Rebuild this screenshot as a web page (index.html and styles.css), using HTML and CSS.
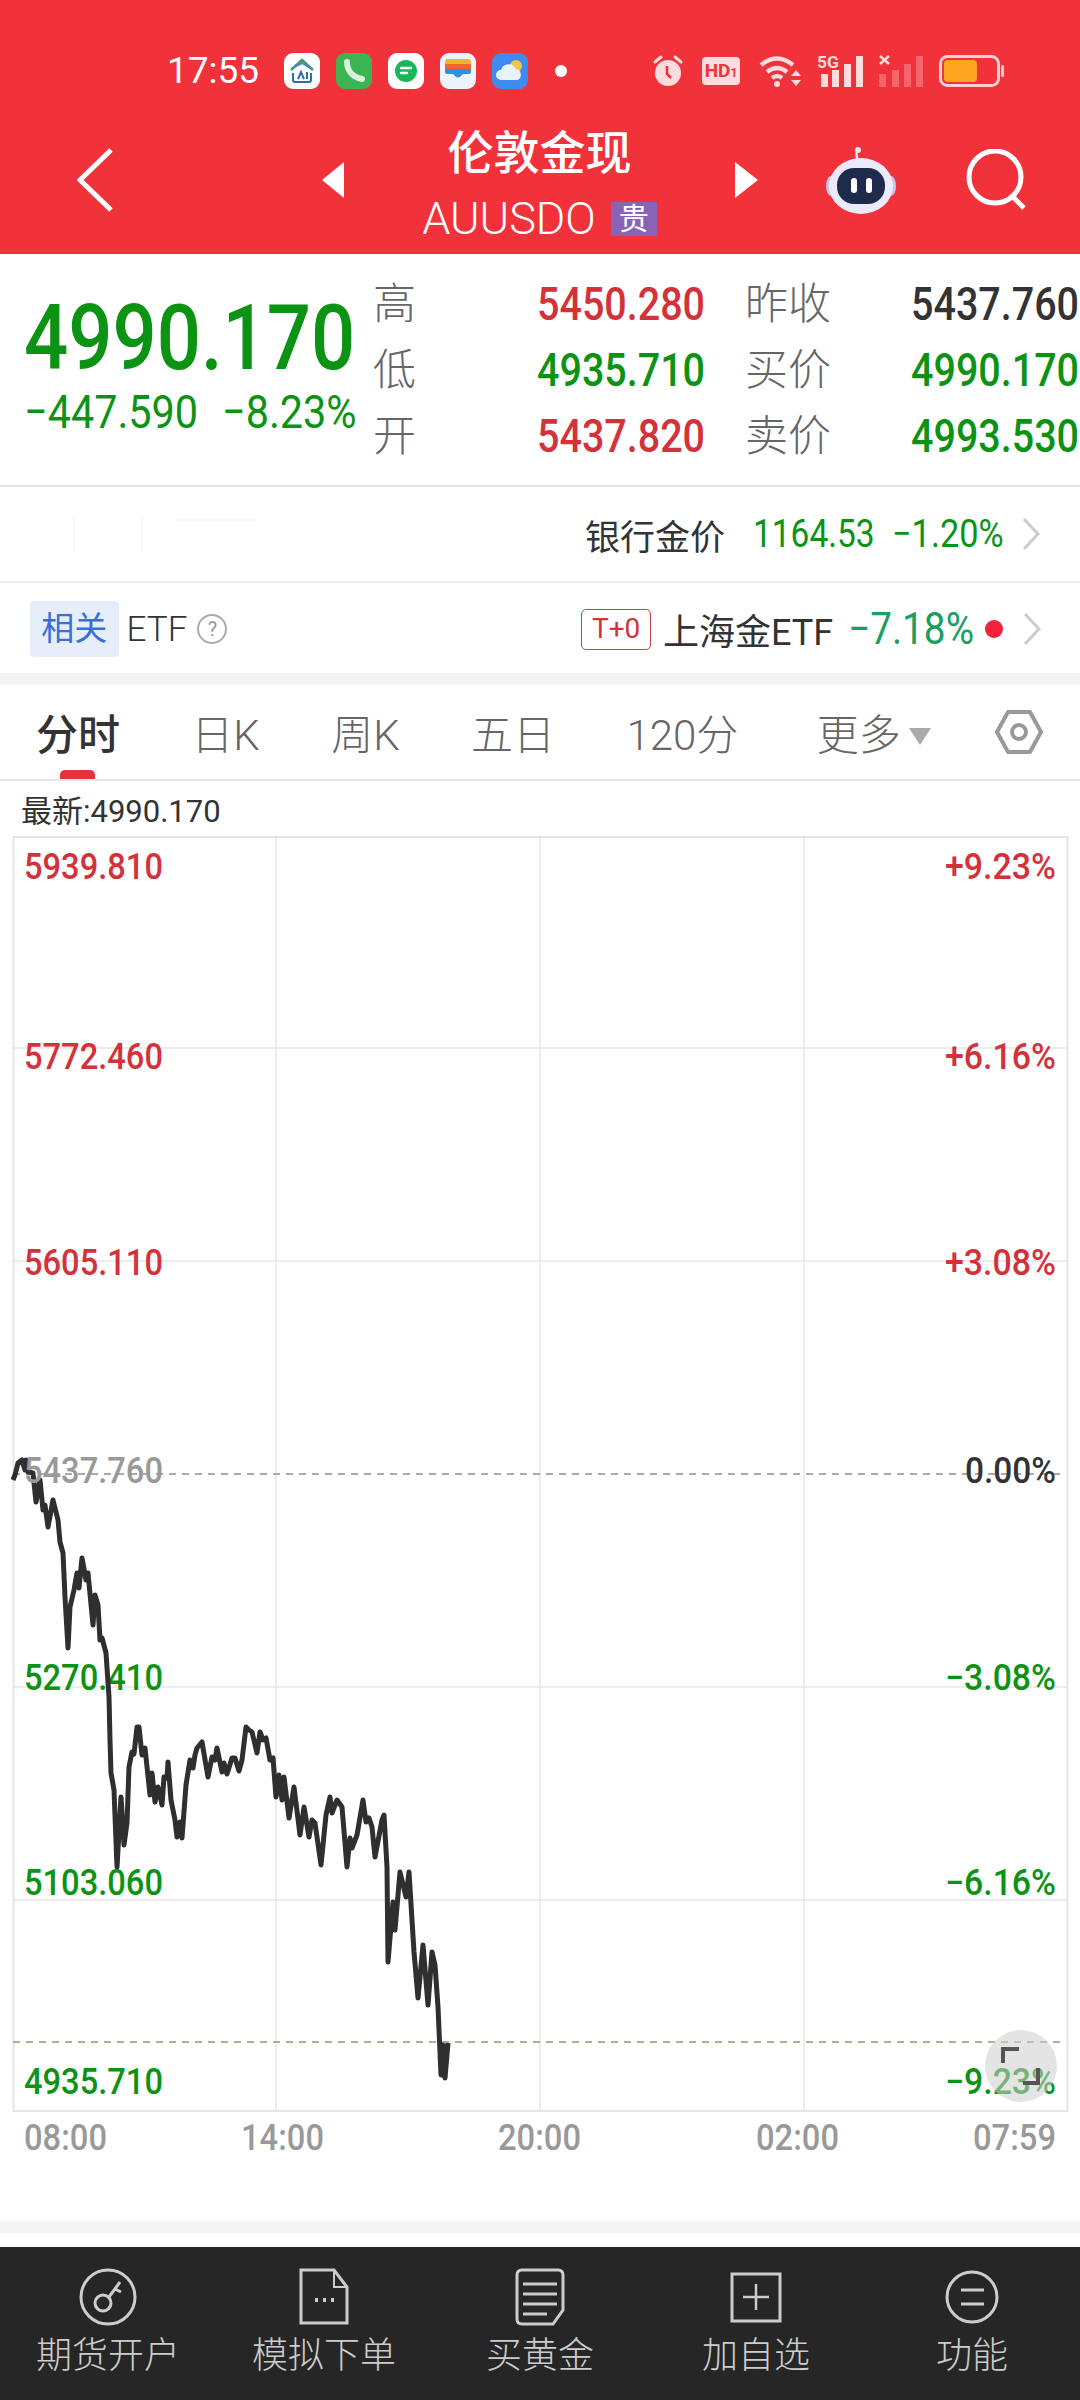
FILE: index.html
```html
<!DOCTYPE html>
<html lang="zh-CN">
<head>
	<meta charset="UTF-8">
	<title>伦敦金现</title>
	<link rel="stylesheet" href="styles.css">
</head>
<body>
	<header class="top">
		<div class="status">
			<span class="time">17:55</span>
			<div class="apps">
				<svg class="app" viewBox="0 0 36 36"><rect width="36" height="36" rx="9" fill="#fff"/><path d="M7 17 18 7l11 10" fill="none" stroke="#3d9a6a" stroke-width="2.5"/><path d="M10 14 18 10l8 5" fill="none" stroke="#4a86c8" stroke-width="2"/><path d="M9 20v7q0 2 2 2h14q2 0 2-2v-7" fill="none" stroke="#2f6da8" stroke-width="2"/><path d="m14 26 3-7 3 7M23 19v7" fill="none" stroke="#2f6da8" stroke-width="2"/></svg>
				<svg class="app" viewBox="0 0 36 36"><rect width="36" height="36" rx="9" fill="#3cb454"/><path d="M11 9c0 9 6 15 15 17" fill="none" stroke="#d8f2dc" stroke-width="6" stroke-linecap="round"/></svg>
				<svg class="app" viewBox="0 0 36 36"><rect width="36" height="36" rx="9" fill="#fff"/><circle cx="18" cy="18" r="11" fill="#18b85a"/><path d="M13 15h10M13 20h6" stroke="#fff" stroke-width="2.4" stroke-linecap="round"/></svg>
				<svg class="app" viewBox="0 0 36 36"><rect width="36" height="36" rx="9" fill="#eef4fb"/><rect x="5" y="6" width="26" height="7" rx="3" fill="#f0b52c"/><rect x="5" y="11" width="26" height="6" fill="#e8692b"/><path d="M5 16h26v3q0 2-2 2h-5q-2 0-3 2-3 3-6 0-1-2-3-2H7q-2 0-2-2z" fill="#2d8fe6"/></svg>
				<svg class="app" viewBox="0 0 36 36"><rect width="36" height="36" rx="9" fill="#3f8cf0"/><circle cx="24" cy="13" r="6" fill="#f5c644"/><path d="M9 27a5 5 0 0 1 0-10 8 8 0 0 1 15-1 6 6 0 0 1 2 11z" fill="#e8f2fb"/></svg>
				<i class="status-dot"></i>
			</div>
			<div class="sys">
				<svg class="alarm" viewBox="0 0 32 34"><circle cx="16" cy="19" r="13" fill="#fcdcdc"/><path d="M3 8l6-5M29 8l-6-5" stroke="#fcdcdc" stroke-width="3" stroke-linecap="round"/><path d="M15 12v8l4 4" fill="none" stroke="#f2323a" stroke-width="2.5"/></svg>
				<span class="hd">HD<small>1</small></span>
				<svg class="wifi" viewBox="0 0 44 34"><g fill="none" stroke="#fcdcdc" stroke-width="4.4"><path d="M2 11q16-13 32 0"/><path d="M8 18q10-8 20 0"/><path d="M13 24q5-4 10 0"/></g><circle cx="18" cy="30" r="3" fill="#fcdcdc"/><path d="M37 16l-5 6h10zM32 26h10l-5 6z" fill="#fcdcdc"/></svg>
				<svg class="signal" viewBox="0 0 46 34"><text class="sig-text" x="0" y="14" textLength="22" lengthAdjust="spacingAndGlyphs">5G</text><g fill="#fcdcdc"><rect x="4" y="20" width="7" height="13"/><rect x="15" y="16" width="7" height="17"/><rect x="27" y="10" width="7" height="23"/><rect x="39" y="2" width="7" height="31"/></g></svg>
				<svg class="signal-off" viewBox="0 0 46 34"><path d="M2 2l9 8M11 2l-9 8" stroke="#fcdcdc" stroke-width="2.6"/><g fill="#fcdcdc" opacity=".3"><rect x="1" y="20" width="7" height="13"/><rect x="14" y="16" width="7" height="17"/><rect x="26" y="10" width="7" height="23"/><rect x="38" y="2" width="7" height="31"/></g></svg>
				<svg class="battery" viewBox="0 0 66 32"><rect x="1.5" y="1.5" width="58" height="29" rx="7" fill="none" stroke="#fbd0d0" stroke-width="3"/><rect x="5" y="5" width="33" height="22" rx="4" fill="#ffa51f"/><rect x="62" y="10" width="3" height="12" rx="1.5" fill="#fbd0d0"/></svg>
			</div>
		</div>
		<div class="nav">
			<div class="nav-back"><svg width="36" height="64" viewBox="0 0 36 64"><path d="M34 2 3 32l31 30" fill="none" stroke="#fff" stroke-width="5"/></svg></div>
			<svg width="22" height="36" viewBox="0 0 22 36"><path d="M22 0v36L0 18z" fill="#fff"/></svg>
			<div class="title-block">
				<div class="title">伦敦金现</div>
				<div class="sub"><span>AUUSDO</span><b class="badge">贵</b></div>
			</div>
			<svg width="23" height="36" viewBox="0 0 23 36"><path d="M0 0v36l23-18z" fill="#fff"/></svg>
			<svg class="robot" width="72" height="68" viewBox="0 0 72 68"><path d="M33 14q-4-9 2-10" fill="none" stroke="#e8e6f6" stroke-width="2.5"/><circle cx="33" cy="4" r="3" fill="#e8e6f6"/><ellipse cx="6" cy="40" rx="5" ry="10" fill="#c9c6ea"/><ellipse cx="66" cy="40" rx="5" ry="10" fill="#c9c6ea"/><ellipse cx="36" cy="40" rx="32" ry="28" fill="#eceafa"/><rect x="12" y="22" width="48" height="36" rx="17" fill="#1f2b4d"/><rect x="26" y="32" width="6" height="15" rx="3" fill="#fff"/><rect x="41" y="32" width="6" height="15" rx="3" fill="#fff"/></svg>
			<svg class="search" width="62" height="62" viewBox="0 0 62 62"><circle cx="29" cy="28" r="26" fill="none" stroke="#fff" stroke-width="5"/><path d="M46 47l12 12" stroke="#fff" stroke-width="5"/></svg>
		</div>
	</header>

	<section class="quote">
		<div class="price-block">
			<div class="price"><span class="squeeze">4990.170</span></div>
			<div class="change">
				<span class="squeeze">−447.590</span>
				<span class="squeeze">−8.23%</span>
			</div>
		</div>
		<div class="stats">
			<span class="lab">高</span><span class="val red"><span class="squeeze-r">5450.280</span></span>
			<span class="lab lab2">昨收</span><span class="val dark"><span class="squeeze-r">5437.760</span></span>
			<span class="lab">低</span><span class="val green"><span class="squeeze-r">4935.710</span></span>
			<span class="lab lab2">买价</span><span class="val green"><span class="squeeze-r">4990.170</span></span>
			<span class="lab">开</span><span class="val red"><span class="squeeze-r">5437.820</span></span>
			<span class="lab lab2">卖价</span><span class="val green"><span class="squeeze-r">4993.530</span></span>
		</div>
	</section>

	<section class="row row-bank">
		<svg class="ghost" width="230" height="40" viewBox="0 0 230 40"><path d="M44 2v36M112 2v36M146 6h80" stroke="#f8f8f8" stroke-width="2" fill="none"/></svg>
		<span class="row-name">银行金价</span>
		<span class="bank-num green"><span class="squeeze">1164.53</span></span>
		<span class="bank-pct green"><span class="squeeze">−1.20%</span></span>
		<svg class="chev" width="18" height="32" viewBox="0 0 18 32"><path d="M2 1l14 15L2 31" fill="none" stroke="#ccc" stroke-width="3"/></svg>
	</section>

	<section class="row row-etf">
		<span class="tag">相关</span>
		<span class="etf">ETF</span>
		<span class="help">?</span>
		<span class="t0">T+0</span>
		<span class="row-name etf-name">上海金ETF</span>
		<span class="etf-pct"><span class="squeeze">−7.18%</span></span>
		<i class="red-dot"></i>
		<svg class="chev" width="18" height="32" viewBox="0 0 18 32"><path d="M2 1l14 15L2 31" fill="none" stroke="#ccc" stroke-width="3"/></svg>
	</section>

	<div class="strip"></div>

	<nav class="tabs">
		<span class="tab on">分时</span>
		<span class="tab">日K</span>
		<span class="tab">周K</span>
		<span class="tab">五日</span>
		<span class="tab">120分</span>
		<span class="tab more">更多<i class="caret"></i></span>
		<svg class="hex" width="48" height="44" viewBox="0 0 48 44"><path d="M13 2h22l11 20-11 20H13L2 22z" fill="none" stroke="#999" stroke-width="4" stroke-linejoin="round"/><circle cx="24" cy="22" r="7" fill="none" stroke="#999" stroke-width="4"/></svg>
	</nav>

	<div class="latest">最新:4990.170</div>

	<svg class="chart" width="1080" height="1385" viewBox="0 836 1080 1385">
		<g class="grid">
			<rect x="13.5" y="837" width="1054" height="1274"/>
			<path d="M276 837v1274M540 837v1274M804 837v1274M13 1048h1054M13 1261h1054M13 1687h1054M13 1900h1054"/>
		</g>
		<path class="base" d="M13 1474h1050"/>
		<path class="now" d="M13 2042h1050"/>

		<g class="nums">
			<text class="red" x="24" y="879" textLength="139" lengthAdjust="spacingAndGlyphs">5939.810</text>
			<text class="red" x="24" y="1069" textLength="139" lengthAdjust="spacingAndGlyphs">5772.460</text>
			<text class="red" x="24" y="1275" textLength="139" lengthAdjust="spacingAndGlyphs">5605.110</text>
			<text class="green" x="24" y="1690" textLength="139" lengthAdjust="spacingAndGlyphs">5270.410</text>
			<text class="green" x="24" y="1895" textLength="139" lengthAdjust="spacingAndGlyphs">5103.060</text>
			<text class="green" x="24" y="2094" textLength="139" lengthAdjust="spacingAndGlyphs">4935.710</text>

			<text class="red" x="945" y="879" textLength="111" lengthAdjust="spacingAndGlyphs">+9.23%</text>
			<text class="red" x="945" y="1069" textLength="111" lengthAdjust="spacingAndGlyphs">+6.16%</text>
			<text class="red" x="945" y="1275" textLength="111" lengthAdjust="spacingAndGlyphs">+3.08%</text>
			<text class="dark" x="965" y="1483" textLength="91" lengthAdjust="spacingAndGlyphs">0.00%</text>
			<text class="green" x="945" y="1690" textLength="111" lengthAdjust="spacingAndGlyphs">−3.08%</text>
			<text class="green" x="945" y="1895" textLength="111" lengthAdjust="spacingAndGlyphs">−6.16%</text>
			<text class="green" x="945" y="2094" textLength="111" lengthAdjust="spacingAndGlyphs">−9.23%</text>

			<text class="gray" x="24" y="2150" textLength="83" lengthAdjust="spacingAndGlyphs">08:00</text>
			<text class="gray" x="241" y="2150" textLength="83" lengthAdjust="spacingAndGlyphs">14:00</text>
			<text class="gray" x="498" y="2150" textLength="83" lengthAdjust="spacingAndGlyphs">20:00</text>
			<text class="gray" x="756" y="2150" textLength="83" lengthAdjust="spacingAndGlyphs">02:00</text>
			<text class="gray" x="973" y="2150" textLength="83" lengthAdjust="spacingAndGlyphs">07:59</text>
		</g>

		<path class="line" d="M13 1480 15 1475 18 1463 22 1460 25 1470 26 1460 28 1472 33 1473 36 1502 40 1480 43 1510 45 1505 48 1527 53 1500 58 1520 60 1542 63 1553 65 1597 68 1648 70 1607 74 1590 77 1573 79 1588 82 1558 86 1580 88 1573 93 1625 95 1595 98 1605 100 1640 102 1638 106 1653 109 1697 110 1740 111 1773 114 1790 117 1867 121 1797 124 1845 127 1823 129 1767 132 1752 134 1754 137 1727 139 1727 142 1755 145 1748 150 1795 152 1773 155 1802 158 1787 162 1805 164 1777 167 1778 168 1762 171 1800 175 1820 177 1837 180 1822 182 1838 186 1785 190 1760 193 1768 195 1755 197 1748 202 1742 208 1777 212 1757 215 1760 217 1748 222 1772 224 1763 227 1774 232 1758 235 1758 239 1771 242 1760 246 1727 249 1730 252 1732 257 1753 260 1732 263 1740 266 1738 270 1760 273 1758 276 1797 279 1775 282 1800 284 1777 289 1818 294 1787 300 1835 304 1807 309 1837 312 1820 315 1823 321 1865 326 1815 330 1797 332 1813 337 1800 342 1807 347 1867 350 1838 352 1848 357 1835 363 1800 366 1822 369 1818 372 1827 375 1857 382 1820 384 1815 387 1867 388 1962 393 1902 395 1930 400 1872 406 1897 409 1872 414 1952 418 1998 423 1945 428 2005 432 1952 435 1965 438 2007 441 2075 443 2045 445 2078 448 2043"/>

		<text class="nums-over" x="24" y="1483" textLength="139" lengthAdjust="spacingAndGlyphs">5437.760</text>

		<circle class="zoom-bg" cx="1021" cy="2066" r="36"/>
		<path class="zoom-ic" d="M1003 2063v-14h16M1023 2083h15v-15"/>
	</svg>

	<div class="strip"></div>

	<footer class="bar">
		<div class="bar-item">
			<svg width="60" height="60" viewBox="0 0 60 60"><circle cx="30" cy="30" r="27" fill="none" stroke="#ccc" stroke-width="3"/><circle cx="25" cy="36" r="8" fill="none" stroke="#ccc" stroke-width="3"/><path d="M31 30l11-15M37 22l6 3" fill="none" stroke="#ccc" stroke-width="3"/></svg>
			<span>期货开户</span>
		</div>
		<div class="bar-item">
			<svg width="60" height="60" viewBox="0 0 60 60"><path d="M7 3h33l13 17v36H7z" fill="none" stroke="#ccc" stroke-width="3"/><path d="M40 3v17h13" fill="none" stroke="#ccc" stroke-width="2"/><path d="M21 33h3M29 33h3M37 33h3" stroke="#ccc" stroke-width="4"/></svg>
			<span>模拟下单</span>
		</div>
		<div class="bar-item">
			<svg width="60" height="60" viewBox="0 0 60 60"><path d="M12 3h36q5 0 5 5v35L43 57H12q-5 0-5-5V8q0-5 5-5z" fill="none" stroke="#ccc" stroke-width="3"/><path d="M13 17h34M13 27h34M13 37h34M13 47h24" stroke="#ccc" stroke-width="3"/></svg>
			<span>买黄金</span>
		</div>
		<div class="bar-item">
			<svg width="60" height="60" viewBox="0 0 60 60"><rect x="6" y="7" width="48" height="47" fill="none" stroke="#ccc" stroke-width="3"/><path d="M30 17v26M17 30h26" stroke="#ccc" stroke-width="2.5"/></svg>
			<span>加自选</span>
		</div>
		<div class="bar-item">
			<svg width="60" height="60" viewBox="0 0 60 60"><circle cx="30" cy="30" r="25" fill="none" stroke="#ccc" stroke-width="3"/><path d="M19 23h23M19 37h23" stroke="#ccc" stroke-width="3"/></svg>
			<span>功能</span>
		</div>
	</footer>
</body>
</html>
```

FILE: styles.css
```css
*{
	margin: 0;
	padding: 0;
	box-sizing: border-box;
}
body{
	width: 1080px;
	height: 2400px;
	overflow: hidden;
	background-color: #fff;
	font-family: Roboto, "Noto Sans CJK SC", sans-serif;
	color: #333;
}
svg{display: block;}
i{display: block;}

/* digits in the app are narrower than Roboto */
.squeeze{
	display: inline-block;
	transform: scaleX(.88);
	transform-origin: left center;
	white-space: nowrap;
}
.squeeze-r{
	display: inline-block;
	transform: scaleX(.84);
	transform-origin: right center;
	white-space: nowrap;
}
.red{color: #d3323b; fill: #d3323b;}
.green{color: #0c9313; fill: #0c9313;}
.dark{color: #333; fill: #333;}
.gray{fill: #999;}

/* header */
.top{
	height: 254px;
	background-color: #f2323a;
	color: #fff;
}
.status{
	height: 120px;
	padding: 22px 0 0 167px;
	display: flex;
	align-items: center;
}
.time{
	width: 117px;
	font-size: 37px;
	line-height: 44px;
}
.apps{
	display: flex;
	align-items: center;
	gap: 16px;
	width: 368px;
}
.app{
	width: 36px;
	height: 36px;
}
.status-dot{
	width: 12px;
	height: 12px;
	margin-left: 11px;
	border-radius: 50%;
	background-color: #fff;
}
.sys{
	display: flex;
	align-items: center;
}
.alarm{width: 32px; height: 34px;}
.hd{
	width: 38px;
	height: 28px;
	margin-left: 18px;
	border-radius: 4px;
	background-color: #fcdcdc;
	color: #f2323a;
	font-size: 19px;
	font-weight: 700;
	line-height: 28px;
	text-align: center;
	white-space: nowrap;
}
.hd small{font-size: 12px;}
.wifi{width: 44px; height: 34px; margin-left: 19px;}
.signal{width: 46px; height: 34px; margin-left: 14px;}
.sig-text{
	font-size: 17px;
	font-weight: 700;
	fill: #fcdcdc;
}
.signal-off{width: 46px; height: 34px; margin-left: 15px;}
.battery{width: 66px; height: 32px; margin-left: 15px;}

.nav{
	height: 134px;
	padding-bottom: 14px;
	display: flex;
	align-items: center;
}
.nav-back{
	width: 322px;
	padding-left: 77px;
}
.title-block{
	width: 391px;
	margin-top: 6px;
	text-align: center;
}
.title{
	font-size: 46px;
	line-height: 62px;
	font-weight: 500;
}
.sub{
	margin-top: 10px;
	display: flex;
	justify-content: center;
	align-items: center;
	gap: 15px;
	font-size: 45px;
	line-height: 50px;
	font-weight: 300;
}
.badge{
	width: 46px;
	height: 34px;
	background-color: #8a63b8;
	font-size: 30px;
	font-weight: 400;
	line-height: 34px;
}
.robot{margin-left: 67px;}
.search{margin-left: 69px;}

/* quote */
.quote{
	height: 233px;
	padding-left: 24px;
	display: flex;
	border-bottom: 2px solid #e4e4e4;
}
.price-block{
	width: 349px;
	padding-top: 41px;
}
.price{
	height: 88px;
	font-size: 90px;
	line-height: 88px;
	font-weight: 500;
	color: #0c9313;
}
.price .squeeze{transform: scaleX(.865);}
.change{
	margin-top: 4px;
	display: flex;
	font-size: 47px;
	line-height: 50px;
	color: #0c9313;
}
.change span{flex: none; width: 198px;}
.stats{
	padding-top: 17px;
	display: grid;
	grid-template-columns: 60px 272px 126px 248px;
	grid-auto-rows: 66px;
}
.lab{
	font-size: 43px;
	line-height: 66px;
	color: #666;
	font-weight: 300;
}
.lab2{padding-left: 40px;}
.val{
	font-size: 47px;
	line-height: 66px;
	font-weight: 500;
	text-align: right;
}

/* rows */
.row{
	display: flex;
	align-items: center;
}
.row-bank{
	height: 96px;
	padding: 0 39px 0 30px;
	border-bottom: 2px solid #efefef;
}
.ghost{margin-right: 325px;}
.row-name{font-size: 35px;}
.bank-num{
	width: 139px;
	margin-left: 28px;
	font-size: 38px;
}
.bank-pct{
	width: 130px;
	font-size: 39px;
}
.row-etf{
	height: 90px;
	padding: 2px 39px 0 30px;
}
.tag{
	width: 89px;
	height: 56px;
	border-radius: 4px;
	background-color: #e6eefb;
	color: #3a6fd8;
	font-size: 33px;
	line-height: 56px;
	text-align: center;
}
.etf{
	margin-left: 8px;
	font-size: 35px;
	font-weight: 300;
}
.help{
	width: 30px;
	height: 30px;
	margin-left: 10px;
	border: 2px solid #aaa;
	border-radius: 50%;
	color: #999;
	font-size: 20px;
	line-height: 26px;
	text-align: center;
}
.t0{
	width: 70px;
	height: 41px;
	margin-left: 354px;
	border: 1.5px solid #c9414a;
	border-radius: 5px;
	color: #d3323b;
	font-size: 28px;
	line-height: 38px;
	text-align: center;
}
.etf-name{
	margin-left: 12px;
	width: 186px;
	font-size: 36px;
	white-space: nowrap;
}
.etf-pct{
	width: 137px;
	font-size: 44px;
	color: #1a9f5f;
}
.red-dot{
	width: 18px;
	height: 18px;
	margin-right: 20px;
	border-radius: 50%;
	background-color: #f0233a;
}
.strip{
	height: 12px;
	background-color: #f4f4f4;
}

/* tabs */
.tabs{
	height: 96px;
	padding: 8px 37px 0 36px;
	display: flex;
	justify-content: space-between;
	align-items: center;
	border-bottom: 2px solid #e8e8e8;
}
.hex{margin-top: -8px;}
.tab{
	position: relative;
	font-size: 42px;
	line-height: 56px;
	font-weight: 300;
	color: #666;
	white-space: nowrap;
}
.tab.on{
	color: #333;
	font-weight: 500;
}
.tab.on::after{
	content: "";
	position: absolute;
	left: 24px;
	top: 62px;
	width: 35px;
	height: 9px;
	border-radius: 5px 5px 0 0;
	background-color: #e5333c;
}
.more{
	display: flex;
	align-items: center;
	margin: 0 -7px 0 7px;
}
.caret{
	width: 0;
	height: 0;
	margin-left: 8px;
	border-left: 11px solid transparent;
	border-right: 11px solid transparent;
	border-top: 17px solid #aaa;
}
.latest{
	height: 55px;
	padding: 5px 0 0 21px;
	font-size: 31px;
	line-height: 52px;
	color: #333;
}

/* chart */
.grid rect,
.grid path{
	fill: none;
	stroke: #e6e6e6;
	stroke-width: 2;
}
.grid path{stroke-width: 1.5;}
.base{
	stroke: #aaa;
	stroke-width: 2;
	stroke-dasharray: 7 6;
}
.now{
	stroke: #b5ad8c;
	stroke-width: 2;
	stroke-dasharray: 7 6;
}
.nums text,
.nums-over{
	font-size: 36px;
	font-weight: 500;
}
.nums-over{fill: #999;}
.line{
	fill: none;
	stroke: #2f2f2f;
	stroke-width: 5;
	stroke-linejoin: round;
}
.zoom-bg{fill: rgba(205,205,205,.55);}
.zoom-ic{
	fill: none;
	stroke: #555;
	stroke-width: 4;
}

/* bottom bar */
.bar{
	height: 153px;
	margin-top: 14px;
	padding-top: 20px;
	display: grid;
	grid-template-columns: repeat(5, 216px);
	background-color: #262626;
}
.bar-item{
	display: flex;
	flex-direction: column;
	align-items: center;
	color: #ccc;
	font-size: 36px;
	font-weight: 300;
	line-height: 48px;
}
.bar-item span{margin-top: 5px;}
```
